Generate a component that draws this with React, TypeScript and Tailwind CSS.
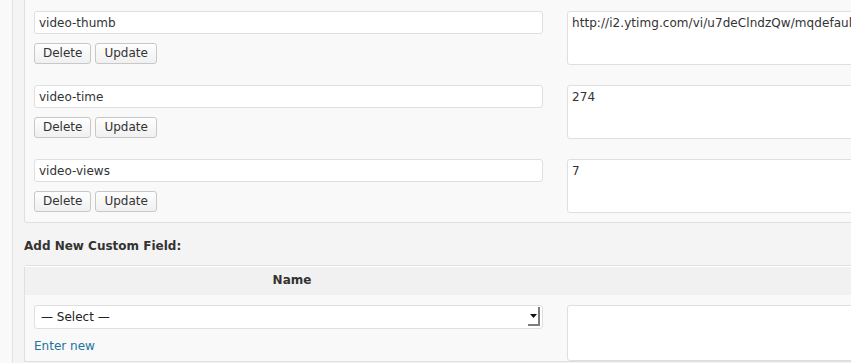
import React from 'react';

const rows = [
  { key: 'video-thumb', value: 'http://i2.ytimg.com/vi/u7deClndzQw/mqdefault.jpg' },
  { key: 'video-time', value: '274' },
  { key: 'video-views', value: '7' },
];

function SmallButton({ children }: { children: React.ReactNode }) {
  return (
    <button className="h-[21px] px-[8px] rounded-[3px] border border-[#c8c8c8] bg-gradient-to-b from-[#fefefe] to-[#f0f0f0] text-[12px] leading-[19px] text-[#333]">
      {children}
    </button>
  );
}

function MetaRow({ name, value }: { name: string; value: string }) {
  return (
    <div className="flex">
      <div className="w-[528px] shrink-0 pl-[9px] pr-[10px] pt-[11px]">
        <input
          readOnly
          value={name}
          className="block w-full h-[23px] px-[4px] rounded-[3px] border border-[#dfdfdf] bg-white text-[12px] text-[#333] outline-none"
        />
        <div className="mt-[9px] flex gap-[4px]">
          <SmallButton>Delete</SmallButton>
          <SmallButton>Update</SmallButton>
        </div>
      </div>
      <div className="pl-[14px] pt-[11px] pb-[9px]">
        <textarea
          readOnly
          value={value}
          className="block w-[420px] h-[54px] pl-[4px] pr-[2px] py-[2px] rounded-[3px] border border-[#dfdfdf] bg-white text-[12px] tracking-[0.06px] leading-[18px] text-[#333] resize-none outline-none whitespace-nowrap overflow-hidden"
        />
      </div>
    </div>
  );
}

export default function App() {
  return (
    <div className="w-[851px] h-[363px] overflow-hidden bg-[#f9f9f9] font-['DejaVu_Sans',sans-serif] text-[12px] text-[#333]">
      <div className="ml-[12px] h-full border-l border-[#e3e3e3] bg-[#f4f4f4] pl-[11px]">
        <div className="w-[1000px] border border-t-0 border-[#dfdfdf] bg-[#f9f9f9] rounded-b-[3px]">
          {rows.map((r) => (
            <MetaRow key={r.key} name={r.key} value={r.value} />
          ))}
        </div>

        <p className="mt-[14px] font-bold text-[12px] leading-[18px] text-[#333]">Add New Custom Field:</p>

        <div className="mt-[10px] w-[1000px] border border-[#dfdfdf] bg-[#f9f9f9] rounded-t-[3px]">
          <div className="flex h-[29px] bg-[#f1f1f1] border-t border-white">
            <div className="w-[528px] shrink-0 flex items-center justify-center font-bold text-[12px] pl-[6px] pb-[2px]">Name</div>
          </div>
          <div className="flex">
            <div className="w-[528px] shrink-0 pl-[9px] pr-[10px] pt-[10px]">
              <div className="relative h-[24px] rounded-[3px] border border-[#dfdfdf] bg-white flex items-center pl-[6px] text-[12px] text-[#222]">
                — Select —
                <div className="absolute right-[2px] top-[1px] w-[12px] h-[19px] border-r-2 border-b-2 border-[#7c7c7c] flex items-center justify-center">
                  <svg width="7" height="4" viewBox="0 0 7 4">
                    <path d="M0 0H7L3.5 4Z" fill="#111" />
                  </svg>
                </div>
              </div>
              <a className="block mt-[9px] text-[12px] leading-[16px] text-[#21759b]">Enter new</a>
            </div>
            <div className="pl-[14px] pt-[10px]">
              <div className="w-[420px] h-[56px] rounded-[3px] border border-[#dfdfdf] bg-white" />
            </div>
          </div>
        </div>
      </div>
    </div>
  );
}
